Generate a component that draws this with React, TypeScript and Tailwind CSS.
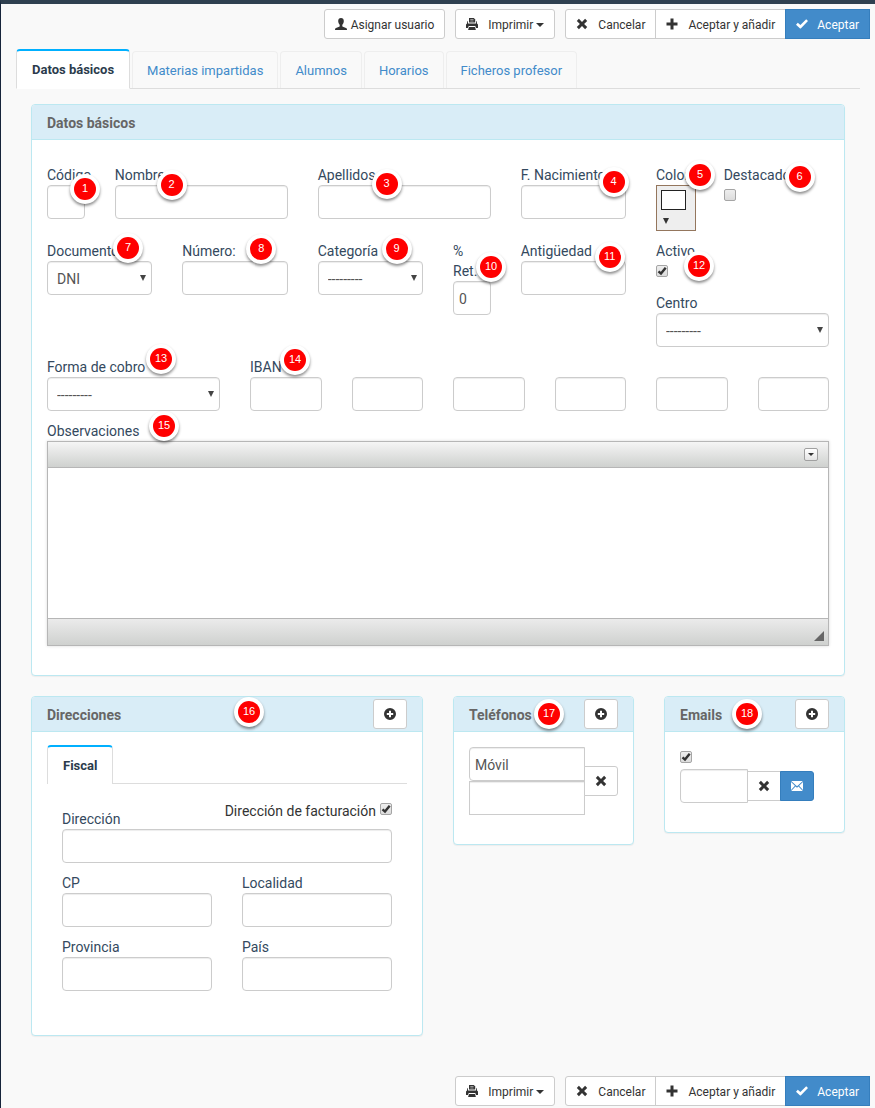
import { useState } from 'react';
import type { ReactNode } from 'react';

const TABS = ['Datos básicos', 'Materias impartidas', 'Alumnos', 'Horarios', 'Ficheros profesor'];

const inputClass =
  'block h-[34px] w-full min-w-0 rounded-[4px] border border-[#ccc] bg-white px-[5px] pt-[2px] text-sm text-[#555] shadow-[inset_0_1px_1px_rgba(0,0,0,0.075)] focus:border-[#66afe9] focus:outline-none';

const btnClass = 'flex h-[30px] items-center border text-xs leading-[18px] cursor-pointer';
const btnDefault = 'border-[#ccc] bg-white text-[#333] hover:bg-[#ebebeb]';
const btnPrimary = 'border-[#357ebd] bg-[#428bca] text-white hover:bg-[#3276b1]';

/* ICONS */
const Icon = ({ children }: { children: ReactNode }) => (
  <svg className="h-3 w-3 shrink-0" viewBox="0 0 12 12" fill="currentColor" aria-hidden="true">
    {children}
  </svg>
);

const UserIcon = () => (
  <Icon>
    <path d="M6 0C4.200 0 3.200 1.200 3.200 3c0 1.500.5 2.900 1.500 3.700v1.200c0 .4-.2.600-.6.800L1 10c-.6.300-1 .8-1 1.400V12h12v-.6c0-.6-.4-1.100-1-1.400L7.900 8.700c-.4-.2-.6-.4-.6-.8V6.700C8.300 5.900 8.800 4.500 8.800 3 8.800 1.200 7.800 0 6 0z" />
  </Icon>
);

const PrintIcon = () => (
  <Icon>
    <path d="M3 0h4.800L9.200 1.400V4.500H3z" />
    <path d="M2 2.800v2.600h8V2.800l.8.900.2 1.800 1 1V10h-2L9.300 8H2.700L2 10H0V6.500l1-1 .2-1.800z" />
    <path d="M3 9h6l.9 3H2.100z" />
    <path d="M4.300 1.500h3.200M4.300 3h3.200" stroke="#fff" strokeWidth="0.5" />
  </Icon>
);

const RemoveIcon = () => (
  <Icon>
    <path d="M2.900.8 6 3.900 9.100.8l2.100 2.100L8.100 6l3.100 3.100-2.100 2.100L6 8.100l-3.100 3.100L.8 9.100 3.900 6 .8 2.900z" />
  </Icon>
);

const PlusIcon = () => (
  <Icon>
    <path d="M4.500.6h3v3.900h4v3h-4v3.900h-3V7.500h-4v-3h4z" />
  </Icon>
);

const OkIcon = () => (
  <Icon>
    <path d="M10.200 1.200 12 3 5 10.200c-.4.400-.8.400-1.200 0L0 6.700l1.800-1.900 2.600 2.200z" />
  </Icon>
);

const PlusSignIcon = () => (
  <Icon>
    <path
      fillRule="evenodd"
      d="M6 0a6 6 0 1 1 0 12A6 6 0 0 1 6 0zM5 2.800V5H2.800v2H5v2.200h2V7h2.200V5H7V2.800z"
    />
  </Icon>
);

const MailIcon = () => (
  <Icon>
    <path d="M.2 1h11.600L6 6.300zM0 2l3.900 3.800L0 10zM12 2v8L8.100 5.800zM4.500 6.500 6 7.800l1.500-1.300L11.800 11H.2z" />
  </Icon>
);

/* Numbered red pin that floats over a field */
const Marker = ({ n, at }: { n: number; at: string }) => (
  <span
    className={`absolute z-10 flex h-[30px] w-[30px] items-center justify-center rounded-full bg-white shadow-[0_2px_3px_rgba(0,0,0,0.45)] ${at}`}
  >
    <span className="flex h-[22px] w-[22px] justify-center rounded-full bg-[#f00] font-['Liberation_Sans',sans-serif] text-[11px] leading-5 font-normal text-white">
      {n}
    </span>
  </span>
);

const Field = ({ id, label, n, at, span, children }: {
  id: string; label: string; n?: number; at?: string; span: string; children: ReactNode;
}) => (
  <div className={`relative ${span}`}>
    <label htmlFor={id} className="block leading-5">{label}</label>
    {children}
    {n && <Marker n={n} at={at ?? ''} />}
  </div>
);

const Select = ({ id, options }: { id: string; options: string[] }) => (
  <div className="relative">
    <select id={id} className={`${inputClass} appearance-none pl-[9px]`}>
      {options.map((o) => <option key={o}>{o}</option>)}
    </select>
    <svg className="pointer-events-none absolute top-[14px] right-[6px] h-[6px] w-[6px]" viewBox="0 0 6 6" fill="#444">
      <path d="M0 0h6L3 6z" />
    </svg>
  </div>
);

const Checkbox = ({ id, label, checked }: { id: string; label?: string; checked?: boolean }) => (
  <span className="relative block h-3 w-3">
    <input
      id={id}
      type="checkbox"
      aria-label={label}
      defaultChecked={checked}
      className="peer block h-3 w-3 appearance-none rounded-[2px] border border-[#a5a5a5] bg-linear-to-b from-[#eee] to-[#dcdcdc]"
    />
    <svg className="pointer-events-none absolute inset-0 hidden h-3 w-3 peer-checked:block" viewBox="0 0 12 12" fill="none" stroke="#333" strokeWidth="2.4">
      <path d="M2.500 6.300 5 8.600 9.700 2.700" />
    </svg>
  </span>
);

const ActionButtons = ({ assign }: { assign?: boolean }) => (
  <div className="flex flex-wrap justify-end gap-[10px] pr-[5px]">
    {assign && (
      <button type="button" className={`${btnClass} ${btnDefault} gap-[4px] rounded-[3px] px-[10px]`}>
        <UserIcon />
        <span className="pt-[2px]">Asignar usuario</span>
      </button>
    )}
    <button type="button" className={`${btnClass} ${btnDefault} gap-[10px] rounded-[3px] px-[10px]`}>
      <PrintIcon />
      <span className="flex items-center gap-[3px] pt-[2px]">
        Imprimir
        <svg className="h-1 w-2" viewBox="0 0 8 4" fill="currentColor"><path d="M0 0h8L4 4z" /></svg>
      </span>
    </button>
    <div className="flex">
      <button type="button" className={`${btnClass} ${btnDefault} gap-[10px] rounded-l-[3px] px-[10px]`}>
        <RemoveIcon />
        <span className="pt-[2px]">Cancelar</span>
      </button>
      <button type="button" className={`${btnClass} ${btnDefault} -ml-px gap-[10px] px-[10px]`}>
        <PlusIcon />
        <span className="pt-[2px]">Aceptar y añadir</span>
      </button>
      <button type="button" className={`${btnClass} ${btnPrimary} -ml-px gap-[9px] px-[10px]`}>
        <OkIcon />
        <span className="pt-[2px]">Aceptar</span>
      </button>
    </div>
  </div>
);

const Panel = ({ title, n, at, add, className, children }: {
  title: string; n?: number; at?: string; add?: boolean; className: string; children: ReactNode;
}) => (
  <section className={`rounded-[4px] border border-[#bce8f1] bg-white shadow-[0_1px_1px_rgba(0,0,0,0.05)] ${className}`}>
    <header className="relative flex h-[35px] items-center justify-between rounded-t-[3px] border-b border-[#bce8f1] bg-[#d9edf7] px-[15px]">
      <h2 className="pt-[2px] font-bold text-[#666]">{title}</h2>
      {add && (
        <button type="button" aria-label={`Añadir ${title}`} className={`${btnClass} ${btnDefault} rounded-[3px] px-[10px]`}>
          <PlusSignIcon />
        </button>
      )}
      {n && <Marker n={n} at={at ?? ''} />}
    </header>
    {children}
  </section>
);

const App = () => {
  const [tab, setTab] = useState(TABS[0]);

  return (
    <div className="min-h-screen border-t-4 border-l border-t-[#2f4050] border-l-[#16243a] bg-[#f9f9f9] pt-[5px] pb-[2px] font-[Roboto,sans-serif] text-sm text-[#34495e]">
      <ActionButtons assign />

      <main className="mt-[10px] px-[15px]">
        <nav className="flex h-10 items-end gap-[2px] border-b border-[#ddd] text-[13px]">
          {TABS.map((t) => (
            <button
              key={t}
              type="button"
              onClick={() => setTab(t)}
              className={
                t === tab
                  ? '-mb-px h-10 rounded-t-[4px] border border-t-2 border-[#ddd] border-t-[#00b0ff] border-b-white bg-white px-[15px] pt-[2px] font-bold text-[#2b3b4c]'
                  : 'h-[37px] cursor-pointer rounded-t-[4px] border border-b-0 border-[#eee] px-[14px] pt-[2px] text-[#428bca]'
              }
            >
              {t}
            </button>
          ))}
        </nav>

        <div className="px-[15px] pt-[15px]">
          <Panel title="Datos básicos" className="mb-5">
            <div className="grid grid-cols-12 gap-x-[30px] gap-y-[10px] px-[15px] pt-[25px] pb-[29px]">
              <Field id="codigo" label="Código" n={1} at="left-[23px] top-[9px]" span="col-span-1">
                <input id="codigo" className={inputClass} />
              </Field>
              <Field id="nombre" label="Nombre" n={2} at="left-[42px] top-[5px]" span="col-span-3">
                <input id="nombre" className={inputClass} />
              </Field>
              <Field id="apellidos" label="Apellidos" n={3} at="left-[54px] top-[4px]" span="col-span-3">
                <input id="apellidos" className={inputClass} />
              </Field>
              <Field id="nacimiento" label="F. Nacimiento" n={4} at="left-[78px] top-[2px]" span="col-span-2">
                <input id="nacimiento" className={inputClass} />
              </Field>
              <Field id="color" label="Color" n={5} at="left-[29px] -top-[5px]" span="col-span-1">
                <button id="color" type="button" className="flex h-[46px] w-10 flex-col items-start gap-[8px] border border-[#94765d] bg-[#eee] p-1">
                  <span className="h-5 w-[25px] border border-[#222] bg-white"></span>
                  <svg className="ml-[2px] h-[6px] w-[6px]" viewBox="0 0 6 6" fill="#333"><path d="M0 0h6L3 6z" /></svg>
                </button>
              </Field>
              <Field id="destacado" label="Destacado" n={6} at="left-[61px] -top-[3px]" span="col-span-2">
                <div className="mt-1"><Checkbox id="destacado" /></div>
              </Field>

              <Field id="documento" label="Documento" n={7} at="left-[66px] -top-[8px]" span="col-span-2">
                <Select id="documento" options={['DNI', 'NIE', 'Pasaporte']} />
              </Field>
              <Field id="numero" label="Número:" n={8} at="left-[64px] -top-[7px]" span="col-span-2">
                <input id="numero" className={inputClass} />
              </Field>
              <Field id="categoria" label="Categoría" n={9} at="left-[64px] -top-[7px]" span="col-span-2">
                <Select id="categoria" options={['---------']} />
              </Field>
              <Field id="retencion" label="% Ret." n={10} at="left-[23px] top-[11px]" span="col-span-1">
                <input id="retencion" defaultValue="0" className={inputClass} />
              </Field>
              <Field id="antiguedad" label="Antigüedad" n={11} at="left-[74px] top-[1px]" span="col-span-2">
                <input id="antiguedad" className={inputClass} />
              </Field>
              <div className="col-span-3">
                <Field id="activo" label="Activo" n={12} at="left-[28px] top-[10px]" span="h-[52px]">
                  <div className="mt-1"><Checkbox id="activo" checked /></div>
                </Field>
                <Field id="centro" label="Centro" span="w-full">
                  <Select id="centro" options={['---------']} />
                </Field>
              </div>

              <Field id="cobro" label="Forma de cobro" n={13} at="left-[99px] -top-[13px]" span="col-span-3">
                <Select id="cobro" options={['---------']} />
              </Field>
              <Field id="iban1" label="IBAN" n={14} at="left-[30px] -top-[12px]" span="col-span-9">
                <div className="grid grid-cols-6 gap-[30px]">
                  {[1, 2, 3, 4, 5, 6].map((i) => (
                    <input key={i} id={`iban${i}`} aria-label={`IBAN ${i}`} className={inputClass} />
                  ))}
                </div>
              </Field>

              {/* RICH TEXT EDITOR */}
              <Field id="observaciones" label="Observaciones" n={15} at="left-[102px] -top-[10px]" span="col-span-12">
                <div className="border border-[#b6b6b6] shadow-[0_0_3px_rgba(0,0,0,0.15)]">
                  <div className="flex h-[26px] items-center justify-end border-b border-[#b6b6b6] bg-linear-to-b from-[#f5f5f5] to-[#cfd1cf] px-[10px]">
                    <button type="button" aria-label="Mostrar barra" className="flex h-[13px] w-[14px] items-center justify-center rounded-[2px] border border-[#a0a0a0] bg-linear-to-b from-white to-[#e4e4e4]">
                      <svg className="h-[3px] w-[6px]" viewBox="0 0 6 3" fill="#333"><path d="M0 0h6L3 3z" /></svg>
                    </button>
                  </div>
                  <textarea id="observaciones" className="block h-[150px] w-full resize-none bg-white p-2 focus:outline-none" />
                  <div className="flex h-[27px] items-end justify-end border-t border-[#b6b6b6] bg-linear-to-b from-[#ebebeb] to-[#cfd1cf] p-1">
                    <svg className="h-[10px] w-[10px]" viewBox="0 0 10 10" fill="#666"><path d="M10 0v10H0z" /></svg>
                  </div>
                </div>
              </Field>
            </div>
          </Panel>

          <div className="grid grid-cols-12 items-start gap-x-[30px]">
            <Panel title="Direcciones" n={16} at="left-[202px] top-0" add className="col-span-6">
              <div className="px-[15px] pt-[13px] pb-[44px]">
                <nav className="flex h-[39px] border-b border-[#ddd] text-[13px]">
                  <button type="button" className="h-[39px] rounded-t-[4px] border border-t-2 border-b-0 border-[#ddd] border-t-[#00b0ff] bg-white px-[15px] pt-[2px] font-bold text-[#2b3b4c]">
                    Fiscal
                  </button>
                </nav>
                <div className="px-[15px] pt-[17px]">
                  <div className="flex h-7 items-start justify-between">
                    <label htmlFor="direccion" className="self-end leading-5">Dirección</label>
                    <div className="flex items-start gap-[4px] text-[#333]">
                      <label htmlFor="facturacion" className="leading-5">Dirección de facturación</label>
                      <div className="pt-[2px]"><Checkbox id="facturacion" checked /></div>
                    </div>
                  </div>
                  <input id="direccion" className={inputClass} />
                  <div className="mt-[10px] grid grid-cols-2 gap-x-[30px] gap-y-[10px]">
                    {['CP', 'Localidad', 'Provincia', 'País'].map((name) => (
                      <Field key={name} id={name} label={name} span="col-span-1">
                        <input id={name} className={inputClass} />
                      </Field>
                    ))}
                  </div>
                </div>
              </div>
            </Panel>

            <Panel title="Teléfonos" n={17} at="left-[80px] top-[2px]" add className="col-span-3">
              <div className="flex items-center px-[15px] pt-[15px] pb-[29px]">
                <div className="min-w-0 flex-1">
                  <input aria-label="Tipo de teléfono" defaultValue="Móvil" className={`${inputClass} rounded-r-none`} />
                  <input aria-label="Teléfono" className={`${inputClass} rounded-none`} />
                </div>
                <button type="button" aria-label="Eliminar teléfono" className={`${btnClass} ${btnDefault} -ml-px rounded-r-[3px] px-[10px]`}>
                  <RemoveIcon />
                </button>
              </div>
            </Panel>

            <Panel title="Emails" n={18} at="left-[67px] top-[2px]" add className="col-span-3">
              <div className="px-[15px] pt-[19px] pb-[29px]">
                <Checkbox id="email-activo" label="Email activo" checked />
                <div className="mt-[6px] flex items-center pr-[15px]">
                  <input aria-label="Email" className={`${inputClass} flex-1 rounded-r-none`} />
                  <button type="button" aria-label="Eliminar email" className={`${btnClass} ${btnDefault} -ml-px px-[10px]`}>
                    <RemoveIcon />
                  </button>
                  <button type="button" aria-label="Enviar email" className={`${btnClass} ${btnPrimary} -ml-px rounded-r-[3px] px-[10px]`}>
                    <MailIcon />
                  </button>
                </div>
              </div>
            </Panel>
          </div>
        </div>
      </main>

      <div className="mt-10">
        <ActionButtons />
      </div>
    </div>
  );
};

export default App;
